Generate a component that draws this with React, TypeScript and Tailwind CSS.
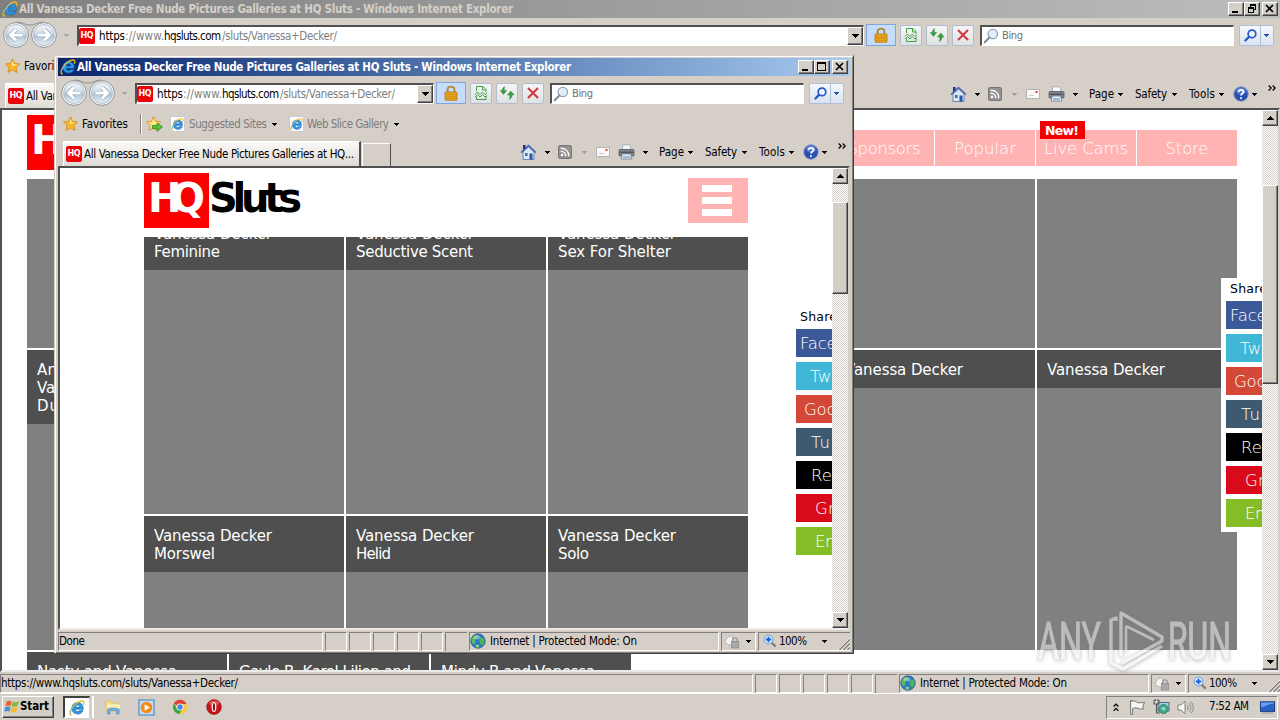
import { useLayoutEffect, useRef, useState } from "react";
import type { ReactNode } from "react";

const ui = "font-['DejaVu_Sans_Condensed','DejaVu_Sans',sans-serif]";
const raised =
  "bg-[#d4d0c8] border border-t-white border-l-white border-r-[#404040] border-b-[#404040] shadow-[inset_-1px_-1px_0_#808080]";
const sunken = "border border-t-[#808080] border-l-[#808080] border-r-white border-b-white";
const pill = "flex h-[21px] shrink-0 items-center justify-center rounded-[2px] border border-[#b3bccb] bg-gradient-to-b from-[#f4f5f6] to-[#dfe2e4]";

/* Single line of text whose letter spacing is adjusted so it fills a given width. */
function Fit({ w, flush = false, className = "", children }: { w: number; flush?: boolean; className?: string; children: string }) {
  const ref = useRef<HTMLSpanElement>(null);
  const [gap, setGap] = useState(0);
  useLayoutEffect(() => {
    if (!ref.current) return;
    const natural = ref.current.getBoundingClientRect().width;
    setGap((w - natural) / Math.max(1, children.length - 1));
  }, [w, children]);
  return (
    <span className={`inline-block shrink-0 whitespace-pre ${flush ? "" : "mt-[2px]"} ${className}`} style={{ width: w }}>
      <span ref={ref} className="inline-block" style={{ letterSpacing: gap }}>
        {children}
      </span>
    </span>
  );
}

function Caret({ className = "text-black" }: { className?: string }) {
  return (
    <svg width="5" height="3" viewBox="0 0 5 3" className={`shrink-0 ${className}`} shapeRendering="crispEdges">
      <path d="M0 0H5V1H4V2H3V3H2V2H1V1H0Z" fill="currentColor" />
    </svg>
  );
}

function IeIcon({ size = 16 }: { size?: number }) {
  return (
    <svg width={size} height={size} viewBox="0 0 16 16" className="shrink-0">
      <path
        d="M8.6 2.6C5.2 2.6 2.8 5 2.8 8.3C2.8 11.8 5.2 14 8.6 14C11.2 14 13.2 12.8 14 10.6H10.7C10.2 11.3 9.5 11.6 8.6 11.6C7.2 11.6 6.2 10.7 6.1 9.2H14.2C14.5 5.2 12.2 2.6 8.6 2.6ZM6.2 7.1C6.4 5.8 7.3 5 8.6 5C9.9 5 10.8 5.8 10.9 7.1Z"
        fill="#2b9be8"
        stroke="#1359a8"
        strokeWidth=".6"
      />
      <path d="M3 14.8C0.5 15.5 .3 12.6 2.6 8.8C5.2 4.6 9.6 1.3 12.9 1C15.2 .9 15.3 2.8 14.3 4.8" fill="none" stroke="#f0b71c" strokeWidth="1.3" />
      <path d="M1.3 13.6C1 11 4 6 8.6 3" fill="none" stroke="#5cb6ef" strokeWidth=".8" />
    </svg>
  );
}

function PageIe() {
  return (
    <span className="flex h-[16px] w-[15px] shrink-0 items-center justify-start border border-[#c9ccd2] bg-white">
      <IeIcon size={13} />
    </span>
  );
}

function Hq() {
  return (
    <span className="flex h-[16px] w-[16px] shrink-0 items-center justify-center rounded-[2px] bg-[#ee0008] font-['DejaVu_Sans',sans-serif] text-[8px] leading-none font-bold text-white">
      <Fit w={13} flush>HQ</Fit>
    </span>
  );
}

function Star({ add = false }: { add?: boolean }) {
  return (
    <svg width="17" height="16" viewBox="0 0 17 16" className="shrink-0">
      <path
        d="M7.5 .8L9.7 5.4L14.6 6L11 9.4L12 14.4L7.5 12L3 14.4L4 9.4L.5 6L5.3 5.4Z"
        fill={add ? "#fbe27a" : "#fbb72c"}
        stroke="#d98d1a"
        strokeWidth=".9"
      />
      <path d="M7.4 2.6L8.7 6.2L12.4 6.8L7 8Z" fill="#fff0a0" />
      {add && <path d="M6.5 9.6H11V7L16.4 11L11 15.2V12.6H6.5Z" fill="#57c040" stroke="#2c8a22" strokeWidth=".8" />}
    </svg>
  );
}

function NavButtons() {
  return (
    <svg width="56" height="28" viewBox="0 0 56 28" className="shrink-0">
      <defs>
        <linearGradient id="disc" x1="0" y1="0" x2="0" y2="1">
          <stop offset="0" stopColor="#f4f7fa" />
          <stop offset=".45" stopColor="#d0dbe6" />
          <stop offset=".55" stopColor="#b0c2d4" />
          <stop offset="1" stopColor="#e6f3fb" />
        </linearGradient>
      </defs>
      <path d="M14 1.2C22 1 22 4 28 4C34 4 34 1 42 1.2" fill="none" stroke="#8d8d8d" strokeWidth="1" />
      {[14, 42].map((x) => (
        <g key={x}>
          <circle cx={x} cy="14" r="12.4" fill="#f6f7f8" stroke="#8c929a" strokeWidth="1" />
          <circle cx={x} cy="14" r="10.4" fill="url(#disc)" stroke="#a3b1c0" strokeWidth=".8" />
        </g>
      ))}
      <path d="M20.5 14H9M14 8.5L8.5 14L14 19.5" fill="none" stroke="#8fa2b8" strokeWidth="4.2" />
      <path d="M20.5 14H9M14 8.5L8.5 14L14 19.5" fill="none" stroke="#fff" strokeWidth="3" />
      <path d="M35.5 14H47M42 8.5L47.5 14L42 19.5" fill="none" stroke="#8fa2b8" strokeWidth="4.2" />
      <path d="M35.5 14H47M42 8.5L47.5 14L42 19.5" fill="none" stroke="#fff" strokeWidth="3" />
    </svg>
  );
}

function Lock() {
  return (
    <svg width="14" height="16" viewBox="0 0 14 16">
      <path d="M3.6 8V4.6C3.6 .6 10.4 .6 10.4 4.6V8" fill="none" stroke="#b08a3a" strokeWidth="1.9" />
      <rect x="1" y="7" width="12" height="8.3" rx=".6" fill="#f0a91c" stroke="#a86f12" strokeWidth=".7" />
      <path d="M1.5 9.3H12.5M1.5 11.3H12.5M1.5 13.3H12.5" stroke="#c27e12" strokeWidth=".7" />
    </svg>
  );
}

function Lens({ blue = false }: { blue?: boolean }) {
  return (
    <svg width={blue ? 13 : 16} height={blue ? 13 : 16} viewBox="0 0 16 16" className="shrink-0">
      <circle cx="9.8" cy="6" r="4.7" fill={blue ? "#eef5ff" : "#e2effa"} stroke={blue ? "#2458c8" : "#8fa3b5"} strokeWidth={blue ? 2.1 : 1.3} />
      <path d="M6.2 9.6L1.8 14.2" stroke={blue ? "#2458c8" : "#7d8893"} strokeWidth={blue ? 2.8 : 2} strokeLinecap="round" />
    </svg>
  );
}

function Globe() {
  return (
    <svg width="16" height="16" viewBox="0 0 16 16" className="shrink-0">
      <circle cx="8" cy="8" r="7.2" fill="#2b76c8" stroke="#285a8c" strokeWidth=".8" />
      <path d="M3 4C5 1.5 8 1.6 9 2.4L7.4 5L4.8 6.2L5.6 9L4 11.4C1.2 10 1 6.4 3 4Z" fill="#56bf58" />
      <path d="M10 5.5L13.6 4.6C15.2 7.5 14.6 10.5 12.6 12.6L10.6 11.4L9.2 8.4Z" fill="#4fb552" />
      <path d="M5.8 11.6L9 12L8.8 14.6L6 14.2Z" fill="#86d684" />
      <ellipse cx="7" cy="4.5" rx="3.6" ry="2" fill="#fff" opacity=".35" />
    </svg>
  );
}

function WinButton({ kind }: { kind: "min" | "max" | "restore" | "close" }) {
  return (
    <span className={`flex h-[14px] w-[16px] items-center justify-center ${raised}`}>
      <svg width="12" height="10" viewBox="0 0 12 10" shapeRendering="crispEdges" fill="none" stroke="#000">
        {kind === "min" && <path d="M2 8H8" strokeWidth="2" />}
        {kind === "max" && <path d="M1.5 .5H9.5V8.5H1.5ZM1 1.5H10" />}
        {kind === "restore" && <path d="M4.5 2.5V.5H9.5V5.5H7.5M4 1.5H10M2.5 3.5H7.5V8.5H2.5ZM2 4.5H8" />}
        {kind === "close" && <path d="M2 1L9 8M9 1L2 8" strokeWidth="1.7" shapeRendering="auto" />}
      </svg>
    </span>
  );
}

function ScrollButton({ down = false }: { down?: boolean }) {
  return (
    <span className={`flex h-[16px] w-[16px] shrink-0 items-center justify-center ${raised}`}>
      <svg width="7" height="4" viewBox="0 0 7 4" shapeRendering="crispEdges">
        <path d={down ? "M0 0H7V1H6V2H5V3H4V4H3V3H2V2H1V1H0Z" : "M3 0H4V1H5V2H6V3H7V4H0V3H1V2H2V1H3Z"} />
      </svg>
    </span>
  );
}

function AddressRow() {
  return (
    <div className="flex h-[34px] shrink-0 items-center pr-[6px] pl-[2px]">
      <NavButtons />
      <Caret className="ml-[6px] text-[#aaa8a4]" />
      <div className="ml-[8px] flex h-[21px] flex-1 items-center border border-t-2 border-l-2 border-t-[#505050] border-l-[#505050] border-r-white border-b-white bg-white text-[11.5px]">
        <Hq />
        <Fit w={26} className="ml-[4px]">https</Fit>
        <Fit w={39} className="text-[#808080]">://www.</Fit>
        <Fit w={57}>hqsluts.com</Fit>
        <Fit w={115} className="ml-px text-[#808080]">/sluts/Vanessa+Decker/</Fit>
        <span className={`ml-auto flex h-[18px] w-[16px] items-center justify-center ${raised}`}>
          <svg width="7" height="4" viewBox="0 0 7 4" shapeRendering="crispEdges">
            <path d="M0 0H7V1H6V2H5V3H4V4H3V3H2V2H1V1H0Z" />
          </svg>
        </span>
      </div>
      <span className="ml-[2px] flex h-[22px] w-[30px] shrink-0 items-center justify-center border border-[#7ea5dc] bg-[#c6dcfb]">
        <Lock />
      </span>
      <span className={`ml-[4px] w-[22px] ${pill}`}>
        <svg width="14" height="16" viewBox="0 0 14 16" fill="none" stroke="#43a047" strokeWidth="1">
          <path d="M2.5 6V1.5H9L12 4.5V7M8.5 2V5H12M2.5 11.5V14.5H12V11" />
          <path d="M1 9.5L3.5 7L6 9.5L8.5 7L11 9.5L13 8M1 12L3.5 9.5L6 12L8.5 9.5L11 12L13 10.5" />
        </svg>
      </span>
      <span className={`ml-[4px] w-[22px] ${pill}`}>
        <svg width="16" height="16" viewBox="0 0 16 16" fill="#3aa03c" stroke="#26782a" strokeWidth=".4">
          <path d="M5.6 1.5C4 2.4 3.4 4 3.4 5.4H1.2L4.4 9.4L7.8 5.4H5.4C5.2 4 5.2 2.6 5.6 1.5Z" />
          <path d="M10.4 14.5C12.4 13.4 13 12 13 10H15.2L11.8 6L8.4 10H10.8C11 11.6 10.9 13.2 10.4 14.5Z" />
        </svg>
      </span>
      <span className={`ml-[4px] w-[22px] ${pill}`}>
        <svg width="12" height="12" viewBox="0 0 12 12">
          <path d="M1 1L11 11M11 1L1 11" stroke="#d03a3c" strokeWidth="2.1" />
        </svg>
      </span>
      <div className="ml-[6px] flex h-[21px] w-[254px] shrink-0 items-center border border-t-2 border-l-2 border-t-[#505050] border-l-[#505050] border-r-white border-b-white bg-white pl-px text-[11px] text-[#707070]">
        <Lens />
        <Fit w={21} className="ml-[3px]">Bing</Fit>
      </div>
      <div className={`ml-[5px] w-[35px] !justify-start !border-[#b0bfd8] !from-[#f6f8fc] !to-[#dbe3f0] ${pill}`}>
        <span className="flex h-full w-[21px] items-center justify-center border-r border-[#b0bfd8]">
          <Lens blue />
        </span>
        <Caret className="ml-[3px] text-[#1d4fae]" />
      </div>
    </div>
  );
}

function FavoritesRow() {
  return (
    <div className="flex h-[28px] shrink-0 items-center pl-[5px] text-[11.5px]">
      <Star />
      <Fit w={46} className="ml-[2px]">Favorites</Fit>
      <span className="ml-[12px] h-[20px] w-[2px] border-l border-[#808080] bg-white" />
      <span className="ml-[4px] flex"><Star add /></span>
      <span className="ml-[7px] flex"><PageIe /></span>
      <Fit w={78} className="ml-[4px] text-[#7c7c7c]">Suggested Sites</Fit>
      <span className="ml-[5px] flex"><Caret /></span>
      <span className="ml-[12px] flex"><PageIe /></span>
      <Fit w={82} className="ml-[3px] text-[#7c7c7c]">Web Slice Gallery</Fit>
      <span className="ml-[5px] flex"><Caret /></span>
    </div>
  );
}

function TabRow() {
  return (
    <div className="flex h-[28px] shrink-0 items-end pl-[5px] text-[11.5px]">
      <div className="flex h-[25px] w-[298px] items-center border-t border-r-2 border-l border-t-white border-r-[#505050] border-l-white bg-gradient-to-b from-[#fbfaf8] to-[#dedad4] pl-[2px]">
        <Hq />
        <Fit w={270} className="ml-[2px]">All Vanessa Decker Free Nude Pictures Galleries at HQ...</Fit>
      </div>
      <div className="ml-px h-[23px] w-[29px] border-t border-r border-l border-t-white border-r-[#505050] border-l-white" />
      <div className="ml-auto flex h-[28px] items-center pr-[4px]">
        <svg width="17" height="17" viewBox="0 0 17 17">
          <path d="M3 8L8.5 3L14 8V15.5H3Z" fill="#dbe8fa" stroke="#6f86b4" />
          <path d="M1 8.6L8.5 1.6L16 8.6" fill="none" stroke="#4a6aa8" strokeWidth="1.5" />
          <path d="M3 1H5.5V4L3 6Z" fill="#1f2f9a" />
          <rect x="9.5" y="9.5" width="3" height="6" fill="#23589c" />
          <rect x="5" y="9" width="2.6" height="3" fill="#456fae" />
        </svg>
        <span className="ml-[8px] flex"><Caret /></span>
        <svg width="14" height="14" viewBox="0 0 14 14" className="ml-[8px]">
          <rect x=".5" y=".5" width="13" height="13" rx="1.5" fill="#929292" stroke="#777" />
          <circle cx="4" cy="10" r="1.3" fill="#fff" />
          <path d="M2.7 6.2C5.6 6.2 7.8 8.4 7.8 11.3M2.7 3.2C7.6 3.2 10.8 6.4 10.8 11.3" fill="none" stroke="#fff" strokeWidth="1.5" />
        </svg>
        <Caret className="ml-[10px] text-[#a0a0a0]" />
        <svg width="14" height="10" viewBox="0 0 14 10" className="ml-[9px]">
          <rect x=".5" y=".5" width="13" height="9" fill="#faf9f8" stroke="#b4b4b4" />
          <rect x="9.5" y="2" width="2" height="2" fill="#e04030" />
          <path d="M3 6.5H8" stroke="#ccc" />
        </svg>
        <svg width="17" height="16" viewBox="0 0 17 16" className="ml-[8px]">
          <path d="M4.5 6V.8H11L12.5 2.5V6" fill="#f4f6f8" stroke="#9aa4ae" strokeWidth=".8" />
          <rect x="1" y="5.5" width="15" height="6.5" rx="1" fill="#7f868d" stroke="#51575d" strokeWidth=".8" />
          <path d="M2 8.2H15" stroke="#3b4046" />
          <path d="M4.3 10H12.7L13.8 15H3.2Z" fill="#e6f0f8" stroke="#708090" strokeWidth=".8" />
          <path d="M5 13H12" stroke="#4d86b8" />
        </svg>
        <span className="ml-[8px] flex"><Caret /></span>
        <Fit w={25} className="ml-[11px]">Page</Fit>
        <span className="ml-[4px] flex"><Caret /></span>
        <Fit w={32} className="ml-[12px]">Safety</Fit>
        <span className="ml-[5px] flex"><Caret /></span>
        <Fit w={26} className="ml-[12px]">Tools</Fit>
        <span className="ml-[4px] flex"><Caret /></span>
        <svg width="16" height="16" viewBox="0 0 16 16" className="ml-[9px]">
          <circle cx="8" cy="8" r="7.3" fill="#2b4fb0" stroke="#8f9fc8" />
          <ellipse cx="8" cy="5" rx="5" ry="3.4" fill="#7d9be4" opacity=".6" />
          <path d="M5.6 6C5.8 3.2 10.6 3.2 10.5 6C10.4 7.6 8 7.7 8 9.6M8 11.2V13" fill="none" stroke="#fff" strokeWidth="1.8" />
        </svg>
        <span className="ml-[3px] flex"><Caret /></span>
        <svg width="8" height="6" viewBox="0 0 8 6" className="mb-[13px] ml-[11px]">
          <path d="M.7 .5L3.2 3L.7 5.5M4.7 .5L7.2 3L4.7 5.5" fill="none" stroke="#000" strokeWidth="1.3" />
        </svg>
      </div>
    </div>
  );
}

function StatusBar({ text, textWidth }: { text: string; textWidth: number }) {
  return (
    <div className="flex h-[21px] shrink-0 items-center gap-[2px] pt-px text-[11.5px]">
      <div className={`flex h-[19px] flex-1 items-center ${sunken}`}>
        <Fit w={textWidth}>{text}</Fit>
      </div>
      {[0, 1, 2, 3, 4].map((n) => (
        <div key={n} className={`h-[19px] w-[22px] ${sunken}`} />
      ))}
      <div className="h-[19px] w-[22px] border-t border-l border-[#808080]" />
      <div className={`flex h-[19px] w-[250px] items-center ${sunken}`}>
        <Globe />
        <Fit w={147} className="ml-[4px]">Internet | Protected Mode: On</Fit>
      </div>
      <div className={`flex h-[19px] w-[35px] items-center pl-[2px] ${sunken}`}>
        <svg width="16" height="15" viewBox="0 0 16 15">
          <path d="M1 9C2 4 5 1 8.5 2.2V12Z" fill="#f4f4f4" stroke="#aaa" strokeWidth=".8" />
          <path d="M8.8 8V6C8.8 3.2 13.2 3.2 13.2 6V8" fill="none" stroke="#999" strokeWidth="1.3" />
          <rect x="7.3" y="7.5" width="7.4" height="6.5" fill="#a9a9a9" stroke="#888" strokeWidth=".7" />
        </svg>
        <span className="ml-[6px] flex"><Caret /></span>
      </div>
      <div className="flex h-[19px] w-[92px] items-center border-t border-b border-l border-t-[#808080] border-b-white border-l-[#808080] pl-[4px]">
        <svg width="14" height="14" viewBox="0 0 14 14">
          <path d="M8 8L12.6 12.6" stroke="#8a7c68" strokeWidth="2.2" />
          <circle cx="5.5" cy="5.5" r="4.4" fill="#d9ecfc" stroke="#6ea0d8" />
          <path d="M5.5 2.8V8.2M2.8 5.5H8.2" stroke="#1c5fd0" strokeWidth="1.8" />
        </svg>
        <Fit w={28} className="ml-[2px]">100%</Fit>
        <span className="ml-[15px] flex"><Caret /></span>
        <svg width="13" height="13" viewBox="0 0 13 13" className="mt-[5px] ml-auto">
          <path d="M1 13L13 1M5 13L13 5M9 13L13 9" stroke="#fff" strokeWidth="1" />
          <path d="M2.2 13L13 2.2M6.2 13L13 6.2M10.2 13L13 10.2" stroke="#858079" strokeWidth="1.4" />
        </svg>
      </div>
    </div>
  );
}

interface BrowserProps {
  active?: boolean;
  status: string;
  statusWidth: number;
  thumb: string;
  children: ReactNode;
}

function Browser({ active = false, status, statusWidth, thumb, children }: BrowserProps) {
  return (
    <div className={`flex h-full w-full flex-col bg-[#d5cfc8] text-black ${ui}`}>
      <div
        className={`flex h-[18px] shrink-0 items-center pr-[2px] pl-[2px] text-[11.5px] font-bold ${
          active ? "bg-gradient-to-r from-[#0b256b] to-[#a6caf0] text-white" : "bg-gradient-to-r from-[#808080] to-[#bdbdbd] text-[#d5cfc8]"
        }`}
      >
        <IeIcon />
        <Fit w={494} className="ml-px">All Vanessa Decker Free Nude Pictures Galleries at HQ Sluts - Windows Internet Explorer</Fit>
        <div className="ml-auto flex">
          <WinButton kind="min" />
          <WinButton kind={active ? "max" : "restore"} />
          <span className="ml-[2px] flex"><WinButton kind="close" /></span>
        </div>
      </div>
      <AddressRow />
      <FavoritesRow />
      <TabRow />
      <div className="flex min-h-0 flex-1 border-2 border-t-[#505050] border-r-[#d5cfc8] border-b-[#eceae6] border-l-[#505050]">
        <div className="relative min-w-0 flex-1 overflow-hidden bg-white font-['DejaVu_Sans',sans-serif]">{children}</div>
        <div className="flex w-[16px] shrink-0 flex-col bg-[repeating-conic-gradient(#ffffff_0_25%,#d4d0c8_0_50%)] bg-[length:2px_2px]">
          <ScrollButton />
          <div className={`${thumb} ${raised}`} />
          <span className="mt-auto flex"><ScrollButton down /></span>
        </div>
      </div>
      <StatusBar text={status} textWidth={statusWidth} />
    </div>
  );
}

function Logo() {
  return (
    <div className="flex h-[55px] items-center text-[40px] leading-[55px] font-bold">
      <span className="flex h-[55px] w-[65px] justify-center bg-[#fb0000] text-white">
        <Fit w={57} flush className="-mt-[2px]">HQ</Fit>
      </span>
      <Fit w={93} flush className="-mt-[4px]">Sluts</Fit>
    </div>
  );
}

type Line = [string, number];

function Card({ lines = [], className }: { lines?: Line[]; className: string }) {
  return (
    <div className={`w-[200px] overflow-hidden bg-[#808080] ${className}`}>
      {lines.length > 0 && (
        <div className="flex flex-col bg-[#4f4f4f] px-[10px] pt-[11px] pb-[9px] text-[15px] leading-[18px] text-white">
          {lines.map(([text, w]) => (
            <Fit key={text} w={w} flush>{text}</Fit>
          ))}
        </div>
      )}
    </div>
  );
}

const networks = [
  { name: "Facebook", style: "bg-[#3b5998] pl-[4px]", w: 76 },
  { name: "Twitter", style: "bg-[#41b7d8] pl-[14px]", w: 57 },
  { name: "Google+", style: "bg-[#d34836] pl-[8px]", w: 70 },
  { name: "Tumblr", style: "bg-[#3e5a70] pl-[15px]", w: 60 },
  { name: "Reddit", style: "bg-black pl-[15px]", w: 53 },
  { name: "Grab", style: "bg-[#d90a1c] pl-[19px]", w: 41 },
  { name: "Email", style: "bg-[#84bd26] pl-[19px]", w: 44 },
];

function Share({ className }: { className: string }) {
  return (
    <div className={`absolute flex h-[254px] w-[92px] flex-col gap-[5px] bg-white pl-[5px] ${className}`}>
      <div className="flex h-[18px] items-center pt-[3px] pl-[4px] text-[12.5px]">
        <Fit w={37}>Share</Fit>
      </div>
      {networks.map((n) => (
        <div key={n.name} className={`flex h-[28px] items-center text-[16.5px] font-extralight text-white ${n.style}`}>
          <Fit w={n.w}>{n.name}</Fit>
        </div>
      ))}
    </div>
  );
}

const nav: Line[] = [["Sponsors", 73], ["Popular", 62], ["Live Cams", 84], ["Store", 43]];

function WidePage() {
  const name: Line = ["Vanessa Decker", 118];
  return (
    <>
      <header className="flex h-[69px] justify-between pr-[25px] pl-[25px]">
        <div className="pt-[5px]"><Logo /></div>
        <nav className="mt-[20px] flex h-[36px] gap-px">
          {nav.map(([label, w]) => (
            <div key={label} className="relative flex w-[100px] items-center justify-center bg-[#ffb3b3] text-[16.5px] font-extralight text-white">
              <Fit w={w}>{label}</Fit>
              {label === "Live Cams" && (
                <span className="absolute -top-[9px] left-[4px] flex h-[18px] w-[45px] items-center bg-[#f20000] pl-[5px] text-[12.5px] font-bold">
                  <Fit w={34}>New!</Fit>
                </span>
              )}
            </div>
          ))}
        </nav>
      </header>
      <div className="grid grid-cols-[repeat(6,200px)] gap-[2px] pl-[25px]">
        {[0, 1, 2, 3, 4, 5].map((n) => (
          <Card key={n} className="h-[169px]" />
        ))}
        <Card className="h-[300px]" lines={[["Angel and", 78], ["Vanessa", 62], ["Duo", 32]]} />
        {[1, 2, 3, 4, 5].map((n) => (
          <Card key={n} className="h-[300px]" lines={[name]} />
        ))}
        <Card className="h-[60px]" lines={[["Nasty and Vanessa", 140]]} />
        <Card className="h-[60px]" lines={[["Gayle B, Karel Lilien and", 172]]} />
        <Card className="h-[60px]" lines={[["Mindy B and Vanessa", 154]]} />
      </div>
      <Share className="top-[168px] left-[1219px]" />
    </>
  );
}

function NarrowPage() {
  const name: Line = ["Vanessa Decker", 118];
  return (
    <>
      <header className="flex h-[69px] justify-between pt-[5px] pr-[84px] pl-[84px]">
        <Logo />
        <div className="mt-[5px] flex h-[45px] w-[60px] flex-col gap-[5px] bg-[#ffb3b3] pt-[7px] pl-[14px]">
          <span className="h-[7px] w-[30px] bg-white" />
          <span className="h-[7px] w-[30px] bg-white" />
          <span className="h-[7px] w-[30px] bg-white" />
        </div>
      </header>
      <div className="overflow-hidden">
        <div className="-mt-[23px] grid grid-cols-[repeat(3,200px)] gap-[2px] pl-[84px]">
          <Card className="h-[300px]" lines={[name, ["Feminine", 66]]} />
          <Card className="h-[300px]" lines={[name, ["Seductive Scent", 117]]} />
          <Card className="h-[300px]" lines={[name, ["Sex For Shelter", 113]]} />
          <Card className="h-[300px]" lines={[name, ["Morswel", 61]]} />
          <Card className="h-[300px]" lines={[name, ["Helid", 35]]} />
          <Card className="h-[300px]" lines={[name, ["Solo", 31]]} />
        </div>
      </div>
      <Share className="top-[138px] left-[731px]" />
    </>
  );
}

function Taskbar() {
  return (
    <div className={`flex h-[27px] shrink-0 items-center border-t border-white bg-[#d5cfc8] pr-[2px] pl-[2px] text-[11.5px] ${ui}`}>
      <div className={`flex h-[22px] w-[52px] items-center pl-px font-bold ${raised}`}>
        <svg width="16" height="16" viewBox="0 0 16 16">
          <path d="M2.5 2.6C4.5 1.4 6 1.6 7.7 2.5L6.7 7C5 6.2 3.4 6.2 1.6 7.2Z" fill="#e8622c" />
          <path d="M8.6 2.8C10.6 3.7 12.4 3.4 14.8 2.2L13.7 6.8C11.6 8 9.8 8.1 7.6 7.2Z" fill="#7fb83c" />
          <path d="M1.4 8.1C3.2 7.2 4.8 7.2 6.5 8L5.4 12.6C3.8 11.8 2.2 11.8 .3 12.8Z" fill="#3d8fd8" />
          <path d="M7.4 8.2C9.4 9.1 11.4 9 13.5 7.8L12.4 12.6C10.2 13.8 8.4 13.7 6.3 12.8Z" fill="#f4bc2c" />
        </svg>
        <Fit w={29} flush>Start</Fit>
      </div>
      <div className="ml-[9px] flex h-[22px] w-[27px] items-center justify-center border border-t-2 border-l-2 border-t-[#404040] border-l-[#404040] border-r-[#d5cfc8] border-b-white bg-white">
        <IeIcon />
      </div>
      <span className="ml-[2px] h-[22px] w-[2px] bg-white" />
      <svg width="16" height="16" viewBox="0 0 16 16" className="ml-[11px]">
        <path d="M1 2H6L7 4H14V12H1Z" fill="#f2df8e" stroke="#d6bc58" strokeWidth=".7" />
        <path d="M2 5.5H15V10H2Z" fill="#faefb4" />
        <path d="M2.5 15V10.5C2.5 8.6 14 8.6 14 10.5V15H11.5V11.5H5V15Z" fill="#6eb4e0" stroke="#4487ba" strokeWidth=".6" />
      </svg>
      <svg width="17" height="17" viewBox="0 0 17 17" className="ml-[17px]">
        <rect x="1" y="1" width="15" height="15" fill="#c4ddf4" stroke="#4e8ed0" strokeWidth="1.2" />
        <circle cx="8.5" cy="8.5" r="5.8" fill="#f58a18" />
        <path d="M6.6 5.3L12 8.5L6.6 11.7Z" fill="#fff" />
      </svg>
      <svg width="16" height="16" viewBox="0 0 16 16" className="ml-[17px]">
        <circle cx="8" cy="8" r="7" fill="#fbc92f" />
        <path d="M8 8L1.7 4.8A7 7 0 0 1 14.4 5H8Z" fill="#e14434" />
        <path d="M1.8 4.7A7 7 0 0 0 7.4 15L10.4 9.6L5 9.4Z" fill="#35a350" />
        <circle cx="8" cy="8" r="3.6" fill="#f4f4f4" />
        <circle cx="8" cy="8" r="2.7" fill="#4386ee" />
      </svg>
      <svg width="16" height="16" viewBox="0 0 16 16" className="ml-[18px]">
        <circle cx="8" cy="8" r="7.4" fill="#c81418" stroke="#881014" strokeWidth=".6" />
        <ellipse cx="8" cy="4" rx="5" ry="2.6" fill="#ec6a68" opacity=".7" />
        <ellipse cx="8" cy="8" rx="2.4" ry="5" fill="#f8efef" />
        <ellipse cx="8" cy="8" rx="1" ry="4" fill="#6e0a0e" />
      </svg>
      <div className={`ml-auto flex h-[23px] w-[172px] items-center pl-[6px] ${sunken}`}>
        <svg width="6" height="9" viewBox="0 0 6 9" fill="none" stroke="#000" strokeWidth="1.2">
          <path d="M.6 3.5L3 1L5.4 3.5M.6 7.8L3 5.3L5.4 7.8" />
        </svg>
        <svg width="17" height="16" viewBox="0 0 17 16" className="ml-[10px]">
          <path d="M2.5 2.5C6 .8 7.5 4 10 3.8L15.5 3.6L13.5 8.2L15 9.8C10 11.2 8 7.4 3.6 9.4V15.4H1.6V1.5H3.2" fill="#f7f7f7" stroke="#666" strokeWidth=".9" />
        </svg>
        <svg width="17" height="16" viewBox="0 0 17 16" className="ml-[7px]">
          <rect x="5" y="3.5" width="11" height="8.5" fill="#a7d3e6" stroke="#4d6e80" />
          <circle cx="10.5" cy="10" r="4.6" fill="#46a883" stroke="#2c7a72" strokeWidth=".8" />
          <path d="M1 1V5H6V1M2.2 0V2M4.8 0V2M3.5 5V14H7" fill="none" stroke="#555" strokeWidth="1.1" />
          <path d="M8 9C10 7 12 8 13 10L10.5 12Z" fill="#8ed0e8" />
        </svg>
        <svg width="17" height="15" viewBox="0 0 17 15" className="ml-[7px]">
          <path d="M1 5H4L8 1.2V13.8L4 10H1Z" fill="#fbfbfb" stroke="#777" strokeWidth=".9" />
          <path d="M10 5C11.4 6.5 11.4 8.5 10 10M12 3.2C14.4 5.8 14.4 9.2 12 11.8M14 1.8C17 5 17 10 14 13.2" fill="none" stroke="#808080" strokeWidth=".9" />
        </svg>
        <Fit w={40} flush className="ml-[15px]">7:52 AM</Fit>
        <svg width="15" height="13" viewBox="0 0 15 13" className="ml-[11px]">
          <rect x=".5" y=".8" width="14" height="9.6" fill="#2a62c8" stroke="#1d3f80" />
          <path d="M1 6C5 6.5 9 2 14 3V1.4H1Z" fill="#6ca0ec" />
          <path d="M2 12H13" stroke="#8c96a8" />
        </svg>
      </div>
    </div>
  );
}

function Watermark() {
  return (
    <svg width="200" height="66" viewBox="0 0 200 66" className="absolute top-[606px] left-[1036px] opacity-55 drop-shadow-[0_1px_2px_#777777]">
      <g fill="#eeeeee" stroke="#eeeeee" strokeWidth="1.1" fontFamily="Roboto, sans-serif" fontSize="51">
        <text x="2" y="53" textLength="63" lengthAdjust="spacingAndGlyphs">ANY</text>
        <text x="132" y="53" textLength="63" lengthAdjust="spacingAndGlyphs">RUN</text>
      </g>
      <g fill="none" stroke="#eeeeee" strokeWidth="3.4" strokeLinejoin="round">
        <path d="M80 15V12L75 14V57L87 63L126 40" />
        <path d="M85 50V7L126 31V35L86 57" />
        <path d="M90 20V45M90 20L118 34" strokeWidth="2.6" />
      </g>
    </svg>
  );
}

export default function App() {
  return (
    <div className="relative flex h-[720px] w-[1280px] flex-col overflow-hidden">
      <div className="h-[693px] shrink-0">
        <Browser status="https://www.hqsluts.com/sluts/Vanessa+Decker/" statusWidth={237} thumb="mt-[59px] h-[199px]">
          <WidePage />
        </Browser>
      </div>
      <Taskbar />
      <Watermark />
      <div className="absolute top-[55px] left-[54px] h-[599px] w-[800px] border border-t-[#d5cfc8] border-r-[#404040] border-b-[#404040] border-l-[#d5cfc8] bg-[#d5cfc8] py-[2px] pr-[2px] pl-[3px] shadow-[inset_1px_1px_0_#ffffff,inset_-1px_-1px_0_#808080]">
        <div className="h-[593px] w-[792px]">
          <Browser active status="Done" statusWidth={26} thumb="mt-[18px] h-[92px]">
            <NarrowPage />
          </Browser>
        </div>
      </div>
    </div>
  );
}
